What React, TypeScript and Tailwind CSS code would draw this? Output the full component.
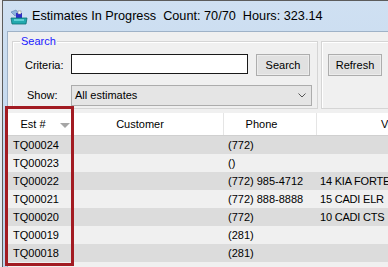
import React from "react";

type Row = {
  est: string;
  phone: string;
  vehicle: string;
};

const rows: Row[] = [
  { est: "TQ00024", phone: "(772)", vehicle: "" },
  { est: "TQ00023", phone: "()", vehicle: "" },
  { est: "TQ00022", phone: "(772) 985-4712", vehicle: "14 KIA FORTE" },
  { est: "TQ00021", phone: "(772) 888-8888", vehicle: "15 CADI ELR" },
  { est: "TQ00020", phone: "(772)", vehicle: "10 CADI CTS" },
  { est: "TQ00019", phone: "(281)", vehicle: "" },
  { est: "TQ00018", phone: "(281)", vehicle: "" },
  { est: "", phone: "", vehicle: "" },
];

function AppIcon() {
  return (
    <svg width="18" height="16" viewBox="0 0 18 16" className="shrink-0">
      <path d="M1 3 L6 1 L9 5 L5 7 Z" fill="#8fb4dc" stroke="#5a7fae" strokeWidth="0.6" />
      <rect x="6" y="4" width="6" height="5" fill="#2f2fc8" />
      <rect x="8" y="2" width="3" height="3" fill="#ffffff" stroke="#777" strokeWidth="0.5" />
      <path d="M1 9 L17 9 L16 15 L2 15 Z" fill="#22a9ae" stroke="#0c6f73" strokeWidth="0.8" />
      <rect x="4" y="10" width="10" height="2" fill="#5fd0d4" />
    </svg>
  );
}

function Button({ label }: { label: string }) {
  return (
    <div className="flex h-[22px] w-[54px] items-center justify-center border border-[#adadad] bg-[#e1e1e1] shadow-[inset_0_0_0_1px_#ececec] text-[11px] text-black">
      {label}
    </div>
  );
}

export default function App() {
  return (
    <div
      className="relative h-[267px] w-[388px] overflow-hidden bg-[#e6e9ee] pl-[2px]"
      style={{ fontFamily: '"Liberation Sans", Arial, sans-serif' }}
    >
      <div className="flex h-full flex-col border-l border-t border-[#5c5c5c] bg-gradient-to-b from-[#cfe0f2] to-[#bcd2ea]">
        {/* title bar */}
        <div className="flex h-[30px] shrink-0 items-center gap-[4px] pl-[7px] pt-[2px]">
          <AppIcon />
          <div className="whitespace-pre text-[12.7px] text-black">
            Estimates In Progress  Count: 70/70  Hours: 323.14
          </div>
        </div>

        {/* client area */}
        <div className="ml-[4px] flex flex-1 flex-col border-l border-t border-[#9fb2c7] bg-[#f0f0f0]">
          <div className="mt-[9px] flex gap-[3px] pl-[4px]">
            {/* search group */}
            <div className="relative h-[68px] w-[306px] border border-[#d5d5d5] shadow-[inset_1px_1px_0_#ffffff]">
              <span className="absolute left-[7px] top-[-8px] bg-[#f0f0f0] px-[1px] text-[11px] leading-[14px] text-[#1a1aff]">
                Search
              </span>
              <div className="flex items-start pt-[12px] pl-[12px]">
                <div className="w-[46px] pt-[3px] text-[11px] text-black">Criteria:</div>
                <div className="h-[20px] w-[177px] border border-[#1a1a1a] bg-white" />
                <div className="ml-[8px]">
                  <Button label="Search" />
                </div>
              </div>
              <div className="mt-[9px] flex items-center pl-[14px]">
                <div className="w-[44px] text-[11px] text-black">Show:</div>
                <div className="flex h-[21px] w-[241px] items-center justify-between border border-[#acacac] bg-[#e5e5e5] pl-[3px] pr-[5px] text-[11px] text-black">
                  <span>All estimates</span>
                  <svg width="8" height="5" viewBox="0 0 8 5">
                    <path d="M0.5 0.5 L4 4 L7.5 0.5" fill="none" stroke="#555" strokeWidth="1" />
                  </svg>
                </div>
              </div>
            </div>

            {/* refresh group */}
            <div className="h-[68px] flex-1 border border-r-0 border-[#d5d5d5] shadow-[inset_1px_1px_0_#ffffff] pl-[6px] pt-[12px]">
              <Button label="Refresh" />
            </div>
          </div>

          {/* grid */}
          <div className="mt-[4px] flex flex-1 flex-col text-[11px] text-black">
            <div className="flex h-[23px] shrink-0 border-b border-[#d0d0d0] bg-white">
              <div className="relative flex w-[66px] shrink-0 items-center border-r border-[#e5e5e5] pl-[2px] pr-[17px]">
                <span className="flex-1 text-center">Est #</span>
                <svg
                  width="10"
                  height="5"
                  viewBox="0 0 10 5"
                  className="absolute right-[3px] top-[10px]"
                >
                  <path d="M0 0 L10 0 L5 5 Z" fill="#a6a6a6" />
                </svg>
              </div>
              <div className="flex w-[150px] shrink-0 items-center border-r border-[#e5e5e5] pr-[17px]">
                <span className="flex-1 text-center">Customer</span>
              </div>
              <div className="flex w-[93px] shrink-0 items-center border-r border-[#e5e5e5] pr-[17px]">
                <span className="flex-1 text-center">Phone</span>
              </div>
              <div className="flex flex-1 items-center pl-[64px]">
                <span>Vehicle</span>
              </div>
            </div>
            {rows.map((r, i) => (
              <div
                key={i}
                className={
                  "flex h-[18px] shrink-0 items-center " +
                  (i % 2 === 0 ? "bg-[#dcdcdc]" : "bg-[#f0f0f0]")
                }
              >
                <div className="w-[66px] shrink-0 pl-[5px]">{r.est}</div>
                <div className="w-[150px] shrink-0" />
                <div className="w-[93px] shrink-0 whitespace-nowrap pl-[4px]">{r.phone}</div>
                <div className="flex-1 whitespace-nowrap pl-[3px] tracking-[-0.2px]">{r.vehicle}</div>
              </div>
            ))}
          </div>
        </div>
      </div>

      {/* highlight annotation */}
      <div className="absolute left-[5px] top-[106px] h-[160px] w-[69px] border-[3px] border-[#a21b22]" />
    </div>
  );
}
